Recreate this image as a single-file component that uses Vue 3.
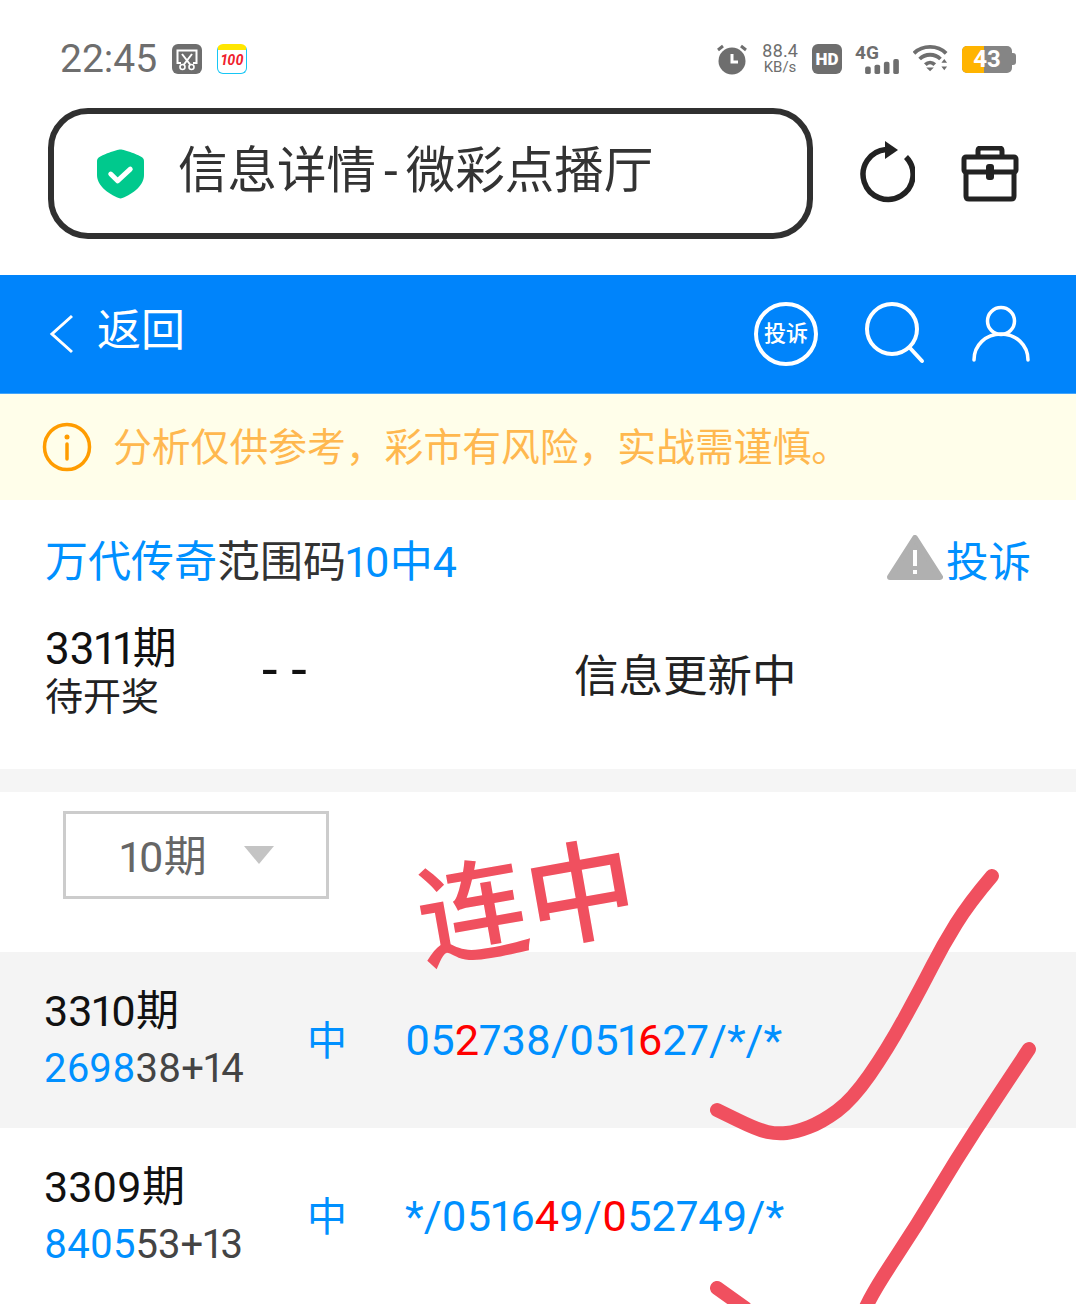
<template>
  <div class="page">
    <div class="status">
      <div class="status-left">
        <span class="clock">22:45</span>
        <svg class="app-ico" width="30" height="30" viewBox="0 0 30 30">
          <rect width="30" height="30" rx="6" fill="#6e6e6e" />
          <path d="M9 19H5.500V6.500H24.500V19H21" fill="none" stroke="#fff" stroke-width="2" />
          <path d="M10 10L18.500 21M20 10L11.500 21" stroke="#fff" stroke-width="2" />
          <circle cx="10.500" cy="23" r="2.500" fill="#6e6e6e" stroke="#fff" stroke-width="1.600" />
          <circle cx="19.500" cy="23" r="2.500" fill="#6e6e6e" stroke="#fff" stroke-width="1.600" />
        </svg>
        <div class="hundred">
          <span class="hundred-num">100</span>
        </div>
      </div>
      <div class="status-right">
        <svg width="32" height="32" viewBox="0 0 32 32">
          <circle cx="16" cy="18" r="13.500" fill="#6e6e6e" />
          <path d="M16 11V19H22" fill="none" stroke="#fff" stroke-width="3" />
          <path d="M2 7L7 3M30 7L25 3" stroke="#6e6e6e" stroke-width="3" />
        </svg>
        <div class="speed"><span>88.4</span><span class="speed-unit">KB/s</span></div>
        <div class="hd">HD</div>
        <div class="net">
          <span class="net-label">4G</span>
          <svg width="36" height="16" viewBox="0 0 36 16">
            <rect x="0" y="8" width="6" height="8" rx="2" fill="#6e6e6e" />
            <rect x="10" y="6" width="6" height="10" rx="2" fill="#6e6e6e" />
            <rect x="20" y="3" width="6" height="13" rx="2" fill="#6e6e6e" />
            <rect x="30" y="0" width="6" height="16" rx="2" fill="#6e6e6e" />
          </svg>
        </div>
        <svg width="36" height="30" viewBox="0 0 38 30">
          <path d="M1 9C10 0 26 0 35 9" fill="none" stroke="#6e6e6e" stroke-width="4" />
          <path d="M7 15C13 9 23 9 29 15" fill="none" stroke="#6e6e6e" stroke-width="4" />
          <path d="M13 21C16 18 20 18 23 21" fill="none" stroke="#6e6e6e" stroke-width="4" />
          <path d="M14 24H22L18 28Z" fill="#6e6e6e" />
          <path d="M30 19L33 15L36 19ZM30 23H36L33 27Z" fill="#6e6e6e" />
        </svg>
        <div class="battery">
          <div class="battery-body">
            <span class="battery-fill"></span>
            <span class="battery-num">43</span>
          </div>
          <span class="battery-tip"></span>
        </div>
      </div>
    </div>

    <div class="address-row">
      <div class="address">
        <svg width="47" height="50" viewBox="0 0 48 50">
          <path d="M24 0C28 0 44 6 46 8C47 9 48 10 48 12V26C48 38 34 47 24 50C14 47 0 38 0 26V12C0 10 1 9 2 8C4 6 20 0 24 0Z" fill="#00c98d" />
          <path d="M14 25L21 32L34 20" fill="none" stroke="#fff" stroke-width="5" stroke-linecap="round" stroke-linejoin="round" />
        </svg>
        <span class="address-text">信息详情<span class="dash">-</span>微彩点播厅</span>
      </div>
      <svg class="reload" width="58" height="62" viewBox="0 0 58 62">
        <path d="M49 16A25 25 0 1 1 29 8.500" fill="none" stroke="#222" stroke-width="5.500" />
        <path d="M28 0L41 9L28 18Z" fill="#222" />
      </svg>
      <svg class="toolbox" width="58" height="56" viewBox="0 0 58 56">
        <path d="M17 11V5C17 3 18 2 20 2H38C40 2 41 3 41 5V11" fill="none" stroke="#222" stroke-width="5" />
        <rect x="3" y="11" width="52" height="15" rx="2" fill="none" stroke="#222" stroke-width="5" />
        <path d="M5 26V50C5 52 6 53 8 53H50C52 53 53 52 53 50V26" fill="none" stroke="#222" stroke-width="5" />
        <rect x="25" y="18" width="8" height="16" rx="3" fill="#222" />
      </svg>
    </div>

    <div class="nav">
      <svg width="26" height="40" viewBox="0 0 26 40">
        <path d="M23 2L3 20L23 38" fill="none" stroke="#fff" stroke-width="3" />
      </svg>
      <span class="nav-back">返回</span>
      <div class="nav-icons">
        <div class="nav-badge">投诉</div>
        <svg width="62" height="66" viewBox="0 0 62 66">
          <circle cx="28" cy="28" r="25" fill="none" stroke="#fff" stroke-width="4" />
          <path d="M46 47L58 60" stroke="#fff" stroke-width="4" stroke-linecap="round" />
        </svg>
        <svg width="58" height="58" viewBox="0 0 58 58">
          <circle cx="29" cy="16" r="13.500" fill="none" stroke="#fff" stroke-width="3.500" />
          <path d="M2 55C2 40 14 29 29 29C44 29 56 40 56 55" fill="none" stroke="#fff" stroke-width="3.500" stroke-linecap="round" />
        </svg>
      </div>
    </div>

    <div class="notice">
      <svg width="50" height="50" viewBox="0 0 50 50">
        <circle cx="25" cy="25" r="22.500" fill="none" stroke="#ff9c00" stroke-width="3.500" />
        <circle cx="25" cy="15" r="2.500" fill="#ff9c00" />
        <path d="M25 22V37" stroke="#ff9c00" stroke-width="3.500" stroke-linecap="round" />
      </svg>
      <span class="notice-text">分析仅供参考，彩市有风险，实战需谨慎。</span>
    </div>

    <div class="info">
      <div class="title-row">
        <div class="title"><span class="blue">万代传奇</span>范围码<span class="blue">10中4</span></div>
        <div class="complain">
          <svg width="56" height="46" viewBox="0 0 56 46">
            <path d="M28 3L53 42H3Z" fill="#b0b0b0" stroke="#b0b0b0" stroke-width="6" stroke-linejoin="round" />
            <path d="M28 15V31" stroke="#fff" stroke-width="4" />
            <rect x="26" y="35" width="4" height="4" fill="#fff" />
          </svg>
          <span>投诉</span>
        </div>
      </div>
      <div class="current">
        <div class="current-issue">
          <div class="issue-no">3311期</div>
          <div class="issue-state">待开奖</div>
        </div>
        <div class="current-code">- -</div>
        <div class="current-msg">信息更新中</div>
      </div>
    </div>

    <div class="band"></div>

    <div class="filter">
      <div class="select">
        <span>10期</span>
        <i class="caret"></i>
      </div>
    </div>

    <div
      v-for="(row, index) in rows"
      :key="row.issue"
      class="record"
      :class="{ shaded: index === 0 }"
    >
      <div class="record-left">
        <div class="record-issue">{{ row.issue }}期</div>
        <div class="record-open"><span class="blue">{{ row.open[0] }}</span>{{ row.open[1] }}</div>
      </div>
      <div class="record-hit">中</div>
      <div class="record-nums">
        <span
          v-for="(part, i) in row.nums"
          :key="i"
          :class="part.hit ? 'red' : 'blue'"
        >{{ part.text }}</span>
      </div>
    </div>

    <!-- 手写批注 -->
    <div class="scribble-text">连中</div>
    <svg class="scribble" width="1076" height="1304" viewBox="0 0 1076 1304">
      <path :d="smooth(check1)" fill="none" stroke="#f0505f" stroke-width="14" stroke-linecap="round" />
      <path :d="smooth(check2)" fill="none" stroke="#f0505f" stroke-width="14" stroke-linecap="round" />
      <path :d="smooth(check2b)" fill="none" stroke="#f0505f" stroke-width="14" stroke-linecap="round" />
    </svg>
  </div>
</template>

<script setup>
const rows = [
  {
    issue: '3310',
    open: ['2698', '38+14'],
    nums: [
      { text: '05' },
      { text: '2', hit: true },
      { text: '738/051' },
      { text: '6', hit: true },
      { text: '27/*/*' }
    ]
  },
  {
    issue: '3309',
    open: ['8405', '53+13'],
    nums: [
      { text: '*/0516' },
      { text: '4', hit: true },
      { text: '9/' },
      { text: '0', hit: true },
      { text: '52749/*' }
    ]
  }
];

const check1 = [
  [992, 876], [969, 903], [943, 945], [921, 988], [887, 1050],
  [852, 1100], [822, 1122], [796, 1132], [777, 1134], [758, 1130], [717, 1110]
];
const check2 = [[1029, 1049], [995, 1100], [956, 1160], [917, 1225], [874, 1290], [860, 1320]];
const check2b = [[717, 1288], [745, 1308]];

// 手写线条：相邻点取中点连二次曲线
const smooth = (pts) => {
  let d = `M${pts[0][0]} ${pts[0][1]}`;
  for (let i = 1; i < pts.length - 1; i++) {
    const mx = (pts[i][0] + pts[i + 1][0]) / 2;
    const my = (pts[i][1] + pts[i + 1][1]) / 2;
    d += `Q${pts[i][0]} ${pts[i][1]} ${mx} ${my}`;
  }
  const last = pts[pts.length - 1];
  return `${d}L${last[0]} ${last[1]}`;
};
</script>

<style>
html,
body {
  margin: 0;
  background: #fff;
}
</style>

<style scoped>
.page {
  position: relative;
  width: 1076px;
  height: 1304px;
  overflow: hidden;
  background: #fff;
  color: #333;
  font-family: Roboto, "Noto Sans CJK SC", sans-serif;
  font-variant-numeric: proportional-nums;
}
.status {
  height: 108px;
  box-sizing: border-box;
  padding: 41px 60px 0;
  display: flex;
  justify-content: space-between;
  align-items: flex-start;
}
.status-left,
.status-right {
  display: flex;
  align-items: center;
  height: 36px;
}
.clock {
  font-size: 39px;
  color: #6e6e6e;
  margin-right: 15px;
}
.app-ico {
  margin-right: 15px;
}
.hundred {
  box-sizing: border-box;
  width: 30px;
  height: 30px;
  border: 1px solid #16c6f5;
  border-top: 6px solid #ffe600;
  border-radius: 6px;
  text-align: center;
  line-height: 20px;
}
.hundred-num {
  font-size: 14px;
  font-style: italic;
  font-weight: 700;
  color: #f0202c;
}
.status-right {
  gap: 13px;
}
.speed {
  width: 38px;
  display: flex;
  flex-direction: column;
  align-items: center;
  font-size: 18px;
  line-height: 16px;
  color: #6e6e6e;
}
.speed-unit {
  font-size: 15px;
}
.hd {
  width: 30px;
  height: 30px;
  background: #6e6e6e;
  border-radius: 6px;
  color: #fff;
  font-size: 17px;
  font-weight: 900;
  line-height: 30px;
  text-align: center;
}
.net {
  width: 45px;
  display: flex;
  flex-direction: column;
  align-items: flex-start;
  height: 30px;
}
.net-label {
  font-size: 19px;
  font-weight: 700;
  line-height: 18px;
  color: #6e6e6e;
}
.net svg {
  align-self: flex-end;
  margin-top: -3px;
}
.battery {
  display: flex;
  align-items: center;
}
.battery-body {
  position: relative;
  width: 50px;
  height: 27px;
  border-radius: 5px;
  background: #858585;
  overflow: hidden;
  text-align: center;
}
.battery-fill {
  position: absolute;
  left: 0;
  top: 0;
  bottom: 0;
  width: 22px;
  background: #ffb400;
}
.battery-num {
  position: relative;
  font-size: 24px;
  font-weight: 700;
  line-height: 27px;
  color: #fff;
}
.battery-tip {
  width: 4px;
  height: 12px;
  background: #858585;
  border-radius: 0 3px 3px 0;
}
.address-row {
  height: 167px;
  box-sizing: border-box;
  padding-left: 48px;
  display: flex;
  align-items: flex-start;
}
.address {
  box-sizing: border-box;
  width: 765px;
  height: 131px;
  border: 6px solid #303030;
  border-radius: 40px;
  padding-left: 43px;
  display: flex;
  align-items: center;
  gap: 34px;
}
.address-text {
  font-size: 49.500px;
  line-height: 60px;
  margin-top: -6px;
  color: #333;
  white-space: nowrap;
}
.dash {
  padding: 0 8px;
}
.reload {
  margin: 33px 46px 0 44px;
}
.toolbox {
  margin-top: 38px;
}
.nav {
  height: 118px;
  background: #0084fb;
  box-sizing: border-box;
  padding: 0 46px 0 49px;
  display: flex;
  align-items: center;
  color: #fff;
}
.nav-back {
  font-size: 44px;
  line-height: 60px;
  margin: -6px 0 0 22px;
}
.nav-icons {
  margin-left: auto;
  display: flex;
  align-items: center;
  gap: 46px;
}
.nav-badge {
  box-sizing: border-box;
  width: 64px;
  height: 64px;
  border: 4px solid #fff;
  border-radius: 50%;
  font-size: 22px;
  font-weight: 500;
  line-height: 56px;
  text-align: center;
  white-space: nowrap;
}
.notice {
  height: 107px;
  background: #fffeea;
  border-top: 1px solid #42a5fb;
  box-sizing: border-box;
  padding-left: 42px;
  display: flex;
  align-items: center;
  gap: 21px;
  font-size: 38.800px;
  color: #ffb84f;
}
.notice-text {
  margin-top: -6px;
  white-space: nowrap;
  text-spacing-trim: space-all;
}
.info {
  height: 269px;
  box-sizing: border-box;
  padding: 28px 45px 0;
}
.title-row {
  display: flex;
  justify-content: space-between;
  align-items: center;
  height: 60px;
}
.title {
  font-size: 43px;
}
.complain {
  display: flex;
  align-items: center;
  gap: 3px;
  font-size: 42.500px;
  color: #0090ff;
}
.current {
  display: flex;
  align-items: center;
  margin-top: 36px;
}
.current-issue {
  width: 217px;
}
.issue-no {
  font-size: 44px;
  line-height: 50px;
  color: #111;
}
.issue-state {
  font-size: 38px;
  line-height: 46px;
  color: #222;
}
.current-code {
  width: 312px;
  font-size: 56px;
  line-height: 60px;
  margin-top: -4px;
  color: #111;
}
.current-msg {
  font-size: 44.500px;
  color: #222;
}
.band {
  height: 23px;
  background: #f5f5f5;
}
.filter {
  height: 160px;
  box-sizing: border-box;
  padding: 19px 0 0 63px;
}
.select {
  box-sizing: border-box;
  width: 266px;
  height: 88px;
  border: 3px solid #ccc;
  padding-left: 54px;
  display: flex;
  align-items: center;
  font-size: 43px;
  color: #666;
}
.select span {
  margin-top: -4px;
}
.caret {
  margin-left: 37px;
  width: 0;
  height: 0;
  border-left: 15px solid transparent;
  border-right: 15px solid transparent;
  border-top: 18px solid #c4c4c4;
}
.record {
  height: 176px;
  box-sizing: border-box;
  padding-left: 44px;
  display: flex;
  align-items: center;
}
.record.shaded {
  background: #f4f4f4;
}
.record-left {
  width: 263px;
}
.record-issue {
  font-size: 43px;
  line-height: 58px;
  color: #111;
}
.record-open {
  font-size: 40px;
  line-height: 58px;
  color: #444;
}
.record-hit {
  width: 98px;
  font-size: 40px;
  margin-top: -4px;
  color: #0090ff;
}
.record-nums {
  font-size: 43.400px;
}
.blue {
  color: #0090ff;
}
.red {
  color: #f00;
}
.scribble {
  position: absolute;
  left: 0;
  top: 0;
  pointer-events: none;
}
.scribble-text {
  position: absolute;
  left: 417px;
  top: 846px;
  font-size: 110px;
  font-weight: 500;
  line-height: 120px;
  color: #f0505f;
  transform: rotate(-10deg);
  white-space: nowrap;
}
</style>
